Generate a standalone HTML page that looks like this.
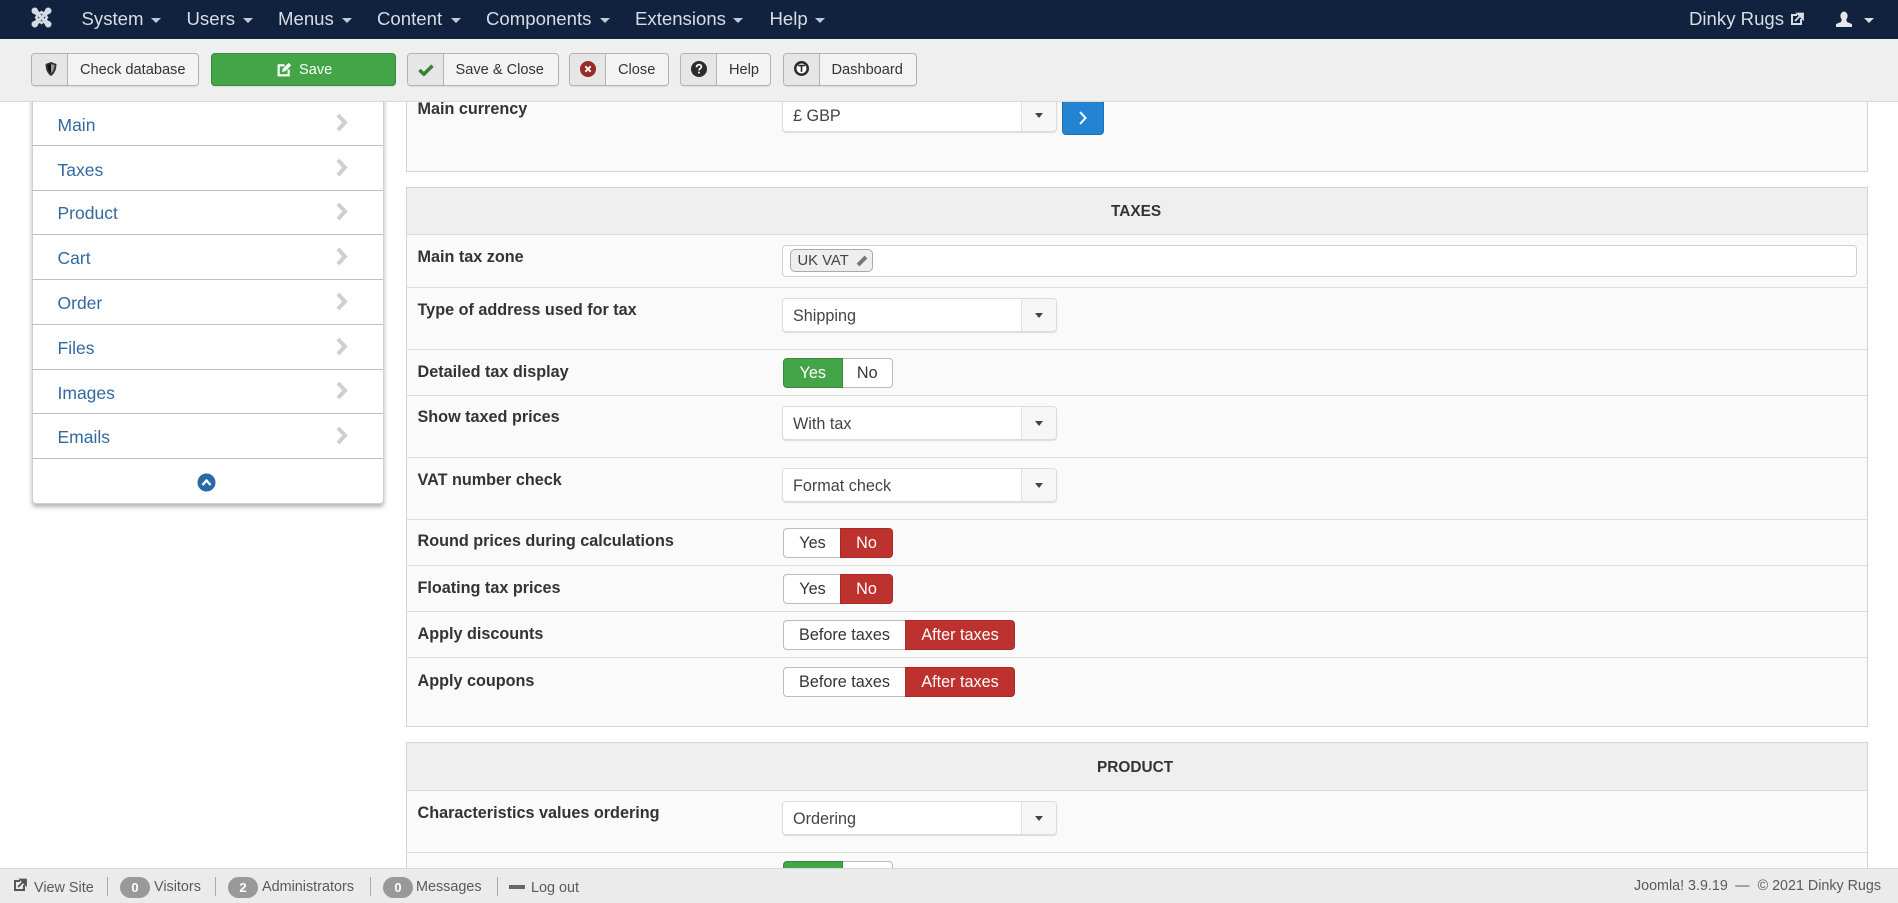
<!DOCTYPE html>
<html lang="en"><head><meta charset="utf-8"><title>Configuration</title>
<style>
*{box-sizing:border-box}
html,body{margin:0;padding:0;width:1898px;height:903px;overflow:hidden;background:#fff;font-family:"Liberation Sans",Arial,sans-serif;color:#333}
.a{position:absolute}
.t{position:absolute;white-space:nowrap;line-height:20px}
#nav{left:0;top:0;width:1898px;height:39px;background:#10223e}
.n{color:#d8dde4;font-size:18.6px;top:9px}
.c{position:absolute;width:0;height:0;border-left:5px solid transparent;border-right:5px solid transparent;border-top:5px solid #c4cad3;top:18px}
#bar{left:0;top:39px;width:1898px;height:63px;background:#efefef;border-bottom:1px solid #d9d9d9;z-index:5}
.b{position:absolute;top:14px;height:33px;border:1px solid #b3b3b3;border-radius:4px;background:#f3f3f3;font-size:14.6px;color:#333;box-shadow:0 1px 1px rgba(0,0,0,.08)}
.b i{position:absolute;left:0;top:0;bottom:0;width:36px;background:#e6e6e6;border-right:1px solid #b3b3b3;border-radius:3px 0 0 3px}
.b span{position:absolute;top:6px;line-height:20px;white-space:nowrap}
.b svg{position:absolute}
#side{left:31.5px;top:90px;width:352px;height:413.5px;background:#fff;border:1px solid #d0d0d0;border-radius:4px;box-shadow:0 3px 5px rgba(0,0,0,.3)}
.r{position:absolute;left:32px;width:351px;height:1px;background:#bfbfbf}
.s{position:absolute;left:57.5px;color:#33699f;font-size:17.5px;line-height:20px}
.p{position:absolute;left:406px;width:1462px;background:#fafafa;border:1px solid #d4d4d4}
.h{position:absolute;left:407px;width:1460px;background:#efefef;border-bottom:1px solid #dedede}
.l{position:absolute;left:407px;width:1460px;height:1px;background:#dedede}
.k{position:absolute;left:417.5px;font-weight:bold;font-size:16.2px;line-height:20px;color:#333;white-space:nowrap}
.sel{position:absolute;left:782px;width:275px;height:34px;background:#fff;border:1px solid #dcdcdc;border-radius:4px;box-shadow:0 1px 1px rgba(0,0,0,.12);font-size:16.2px;color:#444}
.sel span{position:absolute;left:10px;top:7px;line-height:20px}
.sel b{position:absolute;right:0;top:0;bottom:0;width:35px;background:#f6f6f6;border-left:1px solid #e2e2e2;border-radius:0 3px 3px 0}
.sel b:after{content:"";position:absolute;left:13px;top:14px;border-left:4px solid transparent;border-right:4px solid transparent;border-top:5px solid #444}
.tg{position:absolute;height:30px;font-size:16.2px;line-height:28px;text-align:center;color:#333;background:#fff;border:1px solid #bbb}
.ll{border-radius:4px 0 0 4px;border-right:0}
.rr{border-radius:0 4px 4px 0;border-left:0}
.gr{background:#43a547;color:#fff;border:1px solid #37893b}
.rd{background:#bd322e;color:#fff;border:1px solid #a82b28}
#foot{left:0;top:868px;width:1898px;height:35px;background:#ebebeb;border-top:1px solid #d9d9d9;z-index:6;font-size:14.4px;color:#555}
.f{position:absolute;top:9px;line-height:20px;white-space:nowrap;color:#5a5a5a}
.bd{position:absolute;top:8px;width:30px;height:21px;border-radius:11px;background:#999;color:#fff;font-weight:bold;font-size:13px;text-align:center;line-height:21px}
.v{position:absolute;top:8px;width:1px;height:19px;background:#aaa}
</style></head><body>

<div class="a" id="nav">
<svg class="a" style="left:31px;top:7px" width="21" height="21" viewBox="0 0 21 21"><g fill="none" stroke="#d6dbe2" stroke-width="5" stroke-linecap="round"><path d="M4.500 4.500 L16.500 16.500M16.500 4.500 L4.500 16.500"/></g><circle cx="3.800" cy="3.800" r="3.300" fill="#d6dbe2"/><circle cx="17.200" cy="3.800" r="3.300" fill="#d6dbe2"/><circle cx="3.800" cy="17.200" r="3.300" fill="#d6dbe2"/><circle cx="17.200" cy="17.200" r="3.300" fill="#d6dbe2"/><path d="M10.500 3.500l3 2.500-3 2-3-2zM10.500 12.500l3 2.500-3 2.500-3-2.500zM3.500 10.500l2.500-3 2 3-2 3zM12.500 10.500l2.500-3 2.500 3-2.500 3z" fill="#d6dbe2"/><g fill="#39465c"><rect x="9.800" y="6.800" width="1.500" height="1.500"/><rect x="6.800" y="9.800" width="1.500" height="1.500"/><rect x="12.800" y="9.800" width="1.500" height="1.500"/><rect x="9.800" y="12.800" width="1.500" height="1.500"/></g></svg>
<div class="t n" style="left:81.5px">System</div><div class="c" style="left:151px"></div>
<div class="t n" style="left:186.5px">Users</div><div class="c" style="left:243px"></div>
<div class="t n" style="left:278px">Menus</div><div class="c" style="left:342px"></div>
<div class="t n" style="left:377px">Content</div><div class="c" style="left:451px"></div>
<div class="t n" style="left:486px">Components</div><div class="c" style="left:600px"></div>
<div class="t n" style="left:635px">Extensions</div><div class="c" style="left:733px"></div>
<div class="t n" style="left:769.5px">Help</div><div class="c" style="left:815px"></div>
<div class="t n" style="left:1689px">Dinky Rugs</div>
<svg class="a" style="left:1790px;top:12px" width="14" height="14" viewBox="0 0 14 14"><path d="M7 3H2v9h9V7" fill="none" stroke="#d8dde4" stroke-width="2"/><path d="M5 9l5-5M7.500 1.500H13V7z" stroke="#d8dde4" stroke-width="1.800" fill="#d8dde4"/></svg>
<svg class="a" style="left:1836px;top:11px" width="16" height="16" viewBox="0 0 16 16"><ellipse cx="8" cy="5" rx="3.600" ry="4.500" fill="#e4e7eb"/><path d="M6 8h4l1 3 5 2v3H0v-3l5-2z" fill="#e4e7eb"/></svg>
<div class="c" style="left:1864px;top:18px;border-top-color:#d8dde4"></div>
</div>

<div class="a" id="bar">
<div class="b" style="left:31px;width:168px"><i></i><svg style="left:12px;top:7px" width="14" height="16" viewBox="0 0 18 20"><path d="M9 1l7 2.500c0 7-2 12-7 15.500C4 15.500 2 10.500 2 3.500z" fill="#333"/><path d="M9 3.500l4.500 1.500C13 10 12 13 9 15.500z" fill="#999"/><path d="M9 3.500L4.500 5C5 10 6 13 9 15.500z" fill="#111"/></svg><span style="left:48px">Check database</span></div>
<div class="b" style="left:211px;width:185px;background:#43a547;border-color:#37893b;color:#fff"><svg style="left:65px;top:8px" width="15" height="15" viewBox="0 0 18 18"><path d="M9 4H2v12h12V9" fill="none" stroke="#fff" stroke-width="2.600"/><path d="M6 12l1-4 7-7 3 3-7 7z" fill="#fff"/></svg><span style="left:87px">Save</span></div>
<div class="b" style="left:407px;width:152px"><i></i><svg style="left:10px;top:9px" width="16" height="13" viewBox="0 0 18 15"><path d="M1.500 8l5 5L16.500 3" fill="none" stroke="#378137" stroke-width="4"/></svg><span style="left:47.5px">Save &amp; Close</span></div>
<div class="b" style="left:569px;width:100px"><i></i><svg style="left:10px;top:7px" width="16" height="16" viewBox="0 0 18 18"><circle cx="9" cy="9" r="9" fill="#962a26"/><path d="M6 6l6 6M12 6l-6 6" stroke="#fff" stroke-width="2.200"/></svg><span style="left:48px">Close</span></div>
<div class="b" style="left:680px;width:91px"><i></i><svg style="left:10px;top:7px" width="16" height="16" viewBox="0 0 18 18"><circle cx="9" cy="9" r="9" fill="#2b2b2b"/><path d="M6.300 7c0-4 5.400-3.500 5.400-.5 0 2-2.700 2-2.700 4" fill="none" stroke="#fff" stroke-width="2"/><rect x="8" y="12" width="2" height="2" fill="#fff"/></svg><span style="left:48px">Help</span></div>
<div class="b" style="left:783px;width:134px"><i></i><svg style="left:10px;top:7px" width="15" height="15" viewBox="0 0 18 18"><circle cx="9" cy="9" r="7.500" fill="#fff" stroke="#2b2b2b" stroke-width="3"/><path d="M9 6v7M5 5.500h8" stroke="#2b2b2b" stroke-width="2"/></svg><span style="left:47.5px">Dashboard</span></div>
</div>

<div class="a" id="side"></div>
<div class="r" style="top:145px"></div><div class="r" style="top:190px"></div><div class="r" style="top:234px"></div><div class="r" style="top:279px"></div><div class="r" style="top:324px"></div><div class="r" style="top:369px"></div><div class="r" style="top:413px"></div><div class="r" style="top:458px"></div>
<div class="s" style="top:115px">Main</div><div class="s" style="top:160px">Taxes</div><div class="s" style="top:203px">Product</div><div class="s" style="top:248px">Cart</div><div class="s" style="top:293px">Order</div><div class="s" style="top:338px">Files</div><div class="s" style="top:383px">Images</div><div class="s" style="top:427px">Emails</div>
<svg class="a" style="left:0;top:0" width="400" height="500"><g fill="none" stroke="#cfcfcf" stroke-width="4"><path d="M338 115l7 7.500-7 7.500M338 160l7 7.500-7 7.500M338 204l7 7.500-7 7.500M338 249l7 7.500-7 7.500M338 294l7 7.500-7 7.500M338 339l7 7.500-7 7.500M338 383l7 7.500-7 7.500M338 428l7 7.500-7 7.500"/></g><circle cx="206.500" cy="482.500" r="9" fill="#2a69a8"/><path d="M202.500 485l4-4.500 4 4.500" fill="none" stroke="#fff" stroke-width="2.400"/></svg>

<div class="p" style="top:60px;height:112px"></div>
<div class="k" style="top:99px">Main currency</div>
<div class="sel" style="top:98px;height:34px"><span>£ GBP</span><b></b></div>
<div class="a" style="left:1062px;top:96px;width:42px;height:39px;background:#2384d3;border:1px solid #1c6fb5;border-radius:4px"><svg class="a" style="left:13px;top:12px" width="14" height="18" viewBox="0 0 14 18"><path d="M4 3l5.500 6L4 15" fill="none" stroke="#fff" stroke-width="2"/></svg></div>

<div class="p" style="top:187px;height:540px"></div>
<div class="h" style="top:188px;height:47px"></div>
<div class="t" style="left:1111px;top:202px;font-weight:bold;font-size:15.400px;color:#333">TAXES</div>
<div class="l" style="top:287px"></div><div class="l" style="top:349px"></div><div class="l" style="top:395px"></div><div class="l" style="top:457px"></div><div class="l" style="top:519px"></div><div class="l" style="top:565px"></div><div class="l" style="top:611px"></div><div class="l" style="top:657px"></div>

<div class="k" style="top:247px">Main tax zone</div>
<div class="a" style="left:782px;top:245px;width:1075px;height:32px;background:#fff;border:1px solid #d0d0d0;border-radius:4px"></div>
<div class="a" style="left:789.500px;top:249px;width:83px;height:23px;background:#eee;border:1px solid #aaa;border-radius:5px;font-size:14.800px;line-height:22px;color:#444;padding-left:7px;white-space:nowrap">UK VAT<svg class="a" style="left:65px;top:4px" width="13" height="13" viewBox="0 0 13 13"><path d="M2 11L10 3" stroke="#777" stroke-width="4"/></svg></div>

<div class="k" style="top:300px">Type of address used for tax</div>
<div class="sel" style="top:298px"><span>Shipping</span><b></b></div>
<div class="k" style="top:362px">Detailed tax display</div>
<div class="tg ll gr" style="left:783px;top:358px;width:59.500px">Yes</div><div class="tg rr" style="left:842.500px;top:358px;width:50.500px">No</div>
<div class="k" style="top:407px">Show taxed prices</div>
<div class="sel" style="top:406px"><span>With tax</span><b></b></div>
<div class="k" style="top:470px">VAT number check</div>
<div class="sel" style="top:468px"><span>Format check</span><b></b></div>
<div class="k" style="top:531px">Round prices during calculations</div>
<div class="tg ll" style="left:783px;top:528px;width:57px;padding-left:1px">Yes</div><div class="tg rr rd" style="left:840px;top:528px;width:53px">No</div>
<div class="k" style="top:578px">Floating tax prices</div>
<div class="tg ll" style="left:783px;top:574px;width:57px;padding-left:1px">Yes</div><div class="tg rr rd" style="left:840px;top:574px;width:53px">No</div>
<div class="k" style="top:624px">Apply discounts</div>
<div class="tg ll" style="left:783px;top:620px;width:122px">Before taxes</div><div class="tg rr rd" style="left:905px;top:620px;width:110px">After taxes</div>
<div class="k" style="top:671px">Apply coupons</div>
<div class="tg ll" style="left:783px;top:667px;width:122px">Before taxes</div><div class="tg rr rd" style="left:905px;top:667px;width:110px">After taxes</div>

<div class="p" style="top:742px;height:140px"></div>
<div class="h" style="top:743px;height:48px"></div>
<div class="t" style="left:1097px;top:758px;font-weight:bold;font-size:15.400px;color:#333">PRODUCT</div>
<div class="l" style="top:852px"></div>
<div class="k" style="top:803px">Characteristics values ordering</div>
<div class="sel" style="top:801px"><span>Ordering</span><b></b></div>
<div class="tg ll gr" style="left:783px;top:861px;width:59.500px"></div><div class="tg rr" style="left:842.500px;top:861px;width:50.500px"></div>

<div class="a" id="foot">
<svg class="a" style="left:13px;top:9px" width="14" height="14" viewBox="0 0 14 14"><path d="M7 3H2v9h9V7" fill="none" stroke="#555" stroke-width="2"/><path d="M5 9l5-5M7.500 1.500H13V7z" stroke="#555" stroke-width="1.800" fill="#555"/></svg>
<div class="f" style="left:34px">View Site</div><div class="v" style="left:107px"></div>
<div class="bd" style="left:120px">0</div><div class="f" style="left:154px;top:8px">Visitors</div><div class="v" style="left:215px"></div>
<div class="bd" style="left:228px">2</div><div class="f" style="left:262px;top:8px">Administrators</div><div class="v" style="left:370px"></div>
<div class="bd" style="left:383px">0</div><div class="f" style="left:416px;top:8px">Messages</div><div class="v" style="left:497px"></div>
<div class="a" style="left:509px;top:16px;width:16px;height:4px;background:#666"></div><div class="f" style="left:531px">Log out</div>
<div class="f" style="left:1634px;top:7px;font-size:14.300px">Joomla! 3.9.19<span style="margin:0 7px 0 7.500px">—</span><span style="margin-left:1px">© 2021 Dinky Rugs</span></div>
</div>
</body></html>
